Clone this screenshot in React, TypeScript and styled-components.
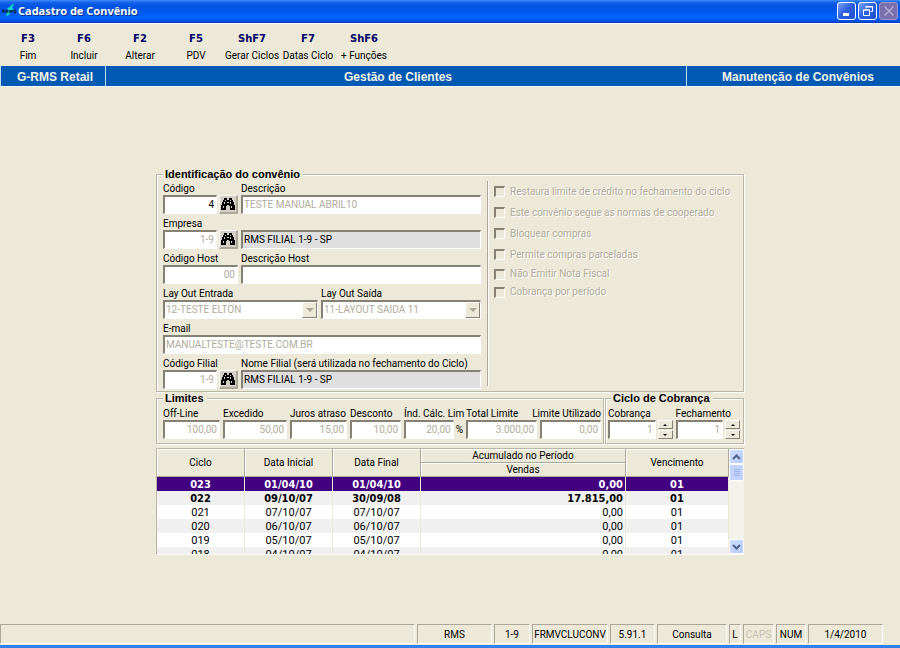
import React from 'react';
import styled, { createGlobalStyle, css } from 'styled-components';

const face = '#ece9d8';
const shade = '#aca899';
const dark = '#858275';
const formFont = 'Roboto, "Liberation Sans", sans-serif';

const GlobalStyle = createGlobalStyle`
  * { box-sizing: border-box; }
  body {
    margin: 0;
    background: ${face};
    color: #000;
    font: 10px/14px ${formFont};
  }
  button, input, select { font: inherit; color: inherit; margin: 0; border-radius: 0; }
  label { height: 14px; line-height: 16px; white-space: nowrap; }
`;

const Window = styled.div`
  display: flex;
  flex-direction: column;
  min-height: 100vh;
  overflow: hidden;
`;

const TitleBar = styled.header`
  display: flex;
  align-items: center;
  gap: 2px;
  height: 23px;
  padding: 0 2px;
  border-bottom: 1px solid #0a3fc0;
  background: linear-gradient(#3b8cfb 0, #1660ea 12%, #0053e1 28%, #0058ee 55%, #0066ff 80%, #0048d8 100%);
`;

const Title = styled.h1`
  flex: 1;
  margin: 0;
  color: #fff;
  font: bold 11px/16px "Noto Sans", sans-serif;
  text-shadow: 1px 1px #0b2f8a;
`;

const WindowButtons = styled.div`
  display: flex;
  gap: 2px;
`;

const WindowButton = styled.button<{ $off?: boolean }>`
  display: grid;
  place-items: center;
  width: 19px;
  height: 18px;
  padding: 0;
  border: 1px solid ${p => (p.$off ? '#a096c8' : '#fff')};
  border-radius: 3px;
  background: ${p => (p.$off ? '#7a70ae' : 'linear-gradient(135deg, #7fa4f5, #2f62e0 45%, #1f4fd0)')};
`;

const Toolbar = styled.nav`
  display: flex;
  height: 43px;
  padding-top: 6px;
  border-top: 1px solid #fff;
`;

const ToolButton = styled.button`
  display: flex;
  flex-direction: column;
  align-items: center;
  width: 56px;
  height: 34px;
  padding: 0;
  border: 0;
  background: none;
  line-height: 17px;
  white-space: nowrap;
`;

const ToolKey = styled.b`
  color: #000066;
  font: bold 10px/17px "DejaVu Sans", sans-serif;
`;

const Band = styled.div`
  display: flex;
  height: 21px;
  border-bottom: 1px solid #fff;
  background: #005ab4;
  color: #f4f2e6;
  font: bold 12px/22px "Liberation Sans", sans-serif;
  text-align: center;
`;

const BandCell = styled.div<{ $width?: number; $end?: boolean }>`
  flex: ${p => (p.$width ? `0 0 ${p.$width}px` : '1')};
  padding-left: 4px;
  border-left: 1px solid #c6dcf0;
  ${p => p.$end && css`padding-right: 26px; text-align: right;`}
`;

const Workspace = styled.main`
  flex: 1;
  padding-top: 81px;
`;

const Form = styled.form`
  width: 100%;
  max-width: 588px;
  margin: 0 auto;
`;

const Group = styled.fieldset<{ $kind?: 'limits' | 'cycle' }>`
  display: flex;
  gap: ${p => (p.$kind ? 3 : 0)}px;
  min-width: 0;
  margin: 0;
  padding: ${p => (p.$kind === 'limits' ? '1px 2px 4px 6px' : p.$kind === 'cycle' ? '1px 3px 4px 2px' : '0 3px 2px 6px')};
  border: 1px solid #b9b6a6;
  box-shadow: inset 1px 1px #fff, 1px 1px #fff;
`;

const Legend = styled.legend<{ $inset?: boolean }>`
  margin-left: ${p => (p.$inset ? 3 : 0)}px;
  padding: 0 3px 0 2px;
  background: ${face};
  font: bold 11px/13px "Liberation Sans", sans-serif;
`;

const GroupRow = styled.div`
  display: grid;
  grid-template-columns: 1fr 139px;
  gap: 1px;
`;

const Identity = styled.div`
  display: flex;
  flex-direction: column;
  gap: 2px;
  flex: 0 0 324px;
  padding-right: 6px;
`;

const Row = styled.div`
  display: flex;
  align-items: flex-end;
  gap: 3px;
`;

const Field = styled.div<{ $width?: number; $right?: boolean }>`
  display: flex;
  flex-direction: column;
  flex: ${p => (p.$width ? `0 0 ${p.$width}px` : '1')};
  min-width: 0;
  align-items: ${p => (p.$right ? 'flex-end' : 'stretch')};
`;

const Line = styled.div`
  display: flex;
  align-items: center;
  align-self: stretch;
  flex: 0 1 auto;
  gap: 2px;
  height: 19px;
`;

const sunken = css`
  border: 1px solid #fff;
  border-top: 2px solid ${dark};
  border-left: 2px solid ${dark};
`;

const Input = styled.input<{ $right?: boolean; $gray?: boolean }>`
  ${sunken}
  min-width: 0;
  width: 100%;
  height: 19px;
  padding: 0 ${p => (p.$right ? 2 : 1)}px 1px;
  background: ${p => (p.$gray ? '#dfdfdf' : '#fff')};
  text-align: ${p => (p.$right ? 'right' : 'left')};
  &:disabled { color: #b0ac9c; }
`;

const Select = styled.select`
  ${sunken}
  display: block;
  width: 100%;
  height: 19px;
  padding: 0 18px 0 1px;
  appearance: none;
  background: #fff;
  &:disabled { color: #b0ac9c; opacity: 1; }
`;

const SelectBox = styled.div`
  position: relative;
  height: 19px;
`;

const SelectArrow = styled.span`
  position: absolute;
  top: 2px;
  right: 1px;
  display: grid;
  place-items: center;
  width: 15px;
  height: 16px;
  border: 1px solid #fff;
  border-right-color: ${dark};
  border-bottom-color: ${dark};
  background: ${face};
  pointer-events: none;
`;

const FindButton = styled.button`
  display: grid;
  place-items: center;
  flex: 0 0 19px;
  height: 19px;
  padding: 0;
  border: 1px solid #fff;
  border-right: 2px solid ${shade};
  border-bottom: 2px solid ${shade};
  background: #d4d0c8;
`;

const Checks = styled.div`
  flex: 1;
  margin-bottom: 3px;
  padding: 0 0 0 6px;
  border-left: 1px solid ${shade};
  box-shadow: inset 1px 0 #fff;
`;

const Check = styled.label<{ $tight?: boolean }>`
  display: flex;
  align-items: center;
  gap: 5px;
  height: ${p => (p.$tight ? 18 : 21)}px;
  color: #b0ac9c;
  text-shadow: 1px 1px #fff;
`;

const CheckInput = styled.input`
  ${sunken}
  appearance: none;
  width: 11px;
  height: 11px;
  background: ${face};
`;

const Spinner = styled.div`
  display: flex;
  flex-direction: column;
  justify-content: space-between;
  flex: 0 0 15px;
  height: 19px;
`;

const SpinButton = styled.button`
  display: grid;
  place-items: center;
  height: 9px;
  padding: 0;
  border: 1px solid #fff;
  border-right-color: ${dark};
  border-bottom-color: ${dark};
  background: ${face};
`;

const GridPanel = styled.div`
  display: flex;
  height: 107px;
  margin-top: 4px;
  border-top: 1px solid #b9b6a6;
  border-left: 1px solid #b9b6a6;
  border-bottom: 1px solid #fff;
  overflow: hidden;
`;

const GridView = styled.div`
  flex: 1;
  min-width: 0;
  overflow: hidden;
`;

const Table = styled.table`
  width: 100%;
  table-layout: fixed;
  border-collapse: separate;
  border-spacing: 0;
  text-align: center;
`;

const Head = styled.th`
  height: 14px;
  padding: 1px 0 0;
  border-right: 1px solid ${shade};
  border-bottom: 1px solid ${shade};
  box-shadow: inset 1px 1px #fff;
  font-weight: normal;
  line-height: 12px;
`;

const BodyRow = styled.tr<{ $state: string }>`
  height: 14px;
  background: ${p => (p.$state === 'selected' ? '#400080' : p.$state === 'odd' ? '#fff' : '#f0f0f0')};
  color: ${p => (p.$state === 'selected' ? '#fff' : '#000')};
`;

const Cell = styled.td<{ $bold?: boolean; $right?: boolean }>`
  height: 14px;
  padding: 1px ${p => (p.$right ? 2 : 0)}px 0 0;
  border-right: 1px solid ${face};
  text-align: ${p => (p.$right ? 'right' : 'center')};
  font: ${p => (p.$bold ? 'bold 11px/13px "DejaVu Sans Condensed", "Liberation Sans", sans-serif' : `11px/13px ${formFont}`)};
`;

const ScrollBar = styled.div`
  display: flex;
  flex-direction: column;
  width: 15px;
  background: #f2f1ea;
`;

const ScrollButton = styled.button`
  display: grid;
  place-items: center;
  height: 15px;
  padding: 0;
  border: 1px solid #fff;
  border-radius: 2px;
  background: linear-gradient(135deg, #cfdcff, #b6cbfb);
`;

const ScrollThumb = styled.div`
  display: grid;
  place-items: center;
  height: 17px;
  margin-bottom: auto;
  border: 1px solid #fff;
  border-radius: 2px;
  background: #c3d3fd;
`;

const StatusBar = styled.footer`
  display: flex;
  gap: 2px;
  height: 24px;
  padding-right: 17px;
  border-bottom: 3px solid #2f80e8;
  line-height: 19px;
  text-align: center;
`;

const StatusCell = styled.div<{ $width?: number; $off?: boolean }>`
  flex: ${p => (p.$width ? `0 0 ${p.$width}px` : '1')};
  height: 20px;
  border: 1px solid #fff;
  border-top-color: ${shade};
  border-left-color: ${shade};
  color: ${p => (p.$off ? '#c4c0b0' : '#000')};
  white-space: nowrap;
`;

const Binoculars = () => (
  <svg width="14" height="12" viewBox="0 0 14 12" shapeRendering="crispEdges" aria-hidden="true">
    <path d="M3 0h3v2h2V0h3v2h1v2h1v3h1v5H9V8H8V7H6v1H5v4H0V7h1V4h1V2h1z" fill="#000" />
    <path d="M4 2h1v1H4zM3 4h1v2H3zM2 8h1v2H2zM9 2h1v1H9zM9 4h1v2H9zM10 8h1v2h-1zM6 4h2v1H6z" fill="#d4d0c8" />
  </svg>
);

const Logo = () => (
  <svg width="14" height="14" viewBox="0 0 14 14" aria-hidden="true">
    <path d="M4 12 6 5 5 4l3-1q1-3 4-3L10 4l2 1-3 2-2 4z" fill="#10d8d0" />
    <path d="M0 9V6h2v1.500H0M2 9V7.500M4 9V6l1 2 1-2v3M8 9V6l1 2 1-2v3M14 6h-2v1.500h1.500V9H12" fill="none" stroke="#02203c" />
  </svg>
);

const Triangle = ({ up, size, color }: { up?: boolean; size: number; color: string }) => (
  <svg width={size * 2} height={size} viewBox="0 0 4 2" aria-hidden="true">
    <path d={up ? 'M0 2 2 0l2 2z' : 'M0 0l2 2 2-2z'} fill={color} />
  </svg>
);

const Chevron = ({ up }: { up?: boolean }) => (
  <svg width="9" height="6" viewBox="0 0 9 6" aria-hidden="true">
    <path d={up ? 'M1 5l3.500-3.500L8 5' : 'M1 1l3.500 3.500L8 1'} fill="none" stroke="#4d6185" strokeWidth="2" />
  </svg>
);

const tools = [
  ['F3', 'Fim'], ['F6', 'Incluir'], ['F2', 'Alterar'], ['F5', 'PDV'],
  ['ShF7', 'Gerar Ciclos'], ['F7', 'Datas Ciclo'], ['ShF6', '+ Funções'],
];

const options = [
  'Restaura limite de crédito no fechamento do ciclo',
  'Este convênio segue as normas de cooperado',
  'Bloquear compras',
  'Permite compras parceladas',
  'Não Emitir Nota Fiscal',
  'Cobrança por período',
];

const cycles = [
  ['023', '01/04/10', '01/04/10', '0,00', '01'],
  ['022', '09/10/07', '30/09/08', '17.815,00', '01'],
  ['021', '07/10/07', '07/10/07', '0,00', '01'],
  ['020', '06/10/07', '06/10/07', '0,00', '01'],
  ['019', '05/10/07', '05/10/07', '0,00', '01'],
  ['018', '04/10/07', '04/10/07', '0,00', '01'],
];

const limits = [
  { id: 'offline', label: 'Off-Line', value: '100,00', width: 57 },
  { id: 'excedido', label: 'Excedido', value: '50,00', width: 64 },
  { id: 'juros', label: 'Juros atraso', value: '15,00', width: 57 },
  { id: 'desconto', label: 'Desconto', value: '10,00', width: 51 },
  { id: 'indice', label: 'Índ. Cálc. Lim', value: '20,00', width: 59, unit: '%' },
  { id: 'total', label: 'Total Limite', value: '3.000,00', width: 71 },
  { id: 'utilizado', label: 'Limite Utilizado', value: '0,00', right: true },
];

const status: { text: string; width?: number; off?: boolean }[] = [
  { text: '' }, { text: 'RMS', width: 75 }, { text: '1-9', width: 36 }, { text: 'FRMVCLUCONV', width: 76 },
  { text: '5.91.1', width: 45 }, { text: 'Consulta', width: 70 }, { text: 'L', width: 12 },
  { text: 'CAPS', width: 31, off: true }, { text: 'NUM', width: 30 }, { text: '1/4/2010', width: 75 },
];

function Lookup({ id, label, value, disabled }: { id: string; label: string; value: string; disabled?: boolean }) {
  return (
    <Field $width={75}>
      <label htmlFor={id}>{label}</label>
      <Line>
        <Input id={id} defaultValue={value} disabled={disabled} $right />
        <FindButton type="button" aria-label={`Procurar ${label}`}><Binoculars /></FindButton>
      </Line>
    </Field>
  );
}

function TextField({ id, label, value, disabled, gray, right, width }: {
  id: string; label: string; value: string; disabled?: boolean; gray?: boolean; right?: boolean; width?: number;
}) {
  return (
    <Field $width={width}>
      <label htmlFor={id}>{label}</label>
      <Line>
        <Input id={id} defaultValue={value} disabled={disabled} readOnly={gray} $gray={gray} $right={right} />
      </Line>
    </Field>
  );
}

function SelectField({ id, label, value, width }: { id: string; label: string; value: string; width?: number }) {
  return (
    <Field $width={width}>
      <label htmlFor={id}>{label}</label>
      <SelectBox>
        <Select id={id} disabled><option>{value}</option></Select>
        <SelectArrow><Triangle size={4} color={shade} /></SelectArrow>
      </SelectBox>
    </Field>
  );
}

function SpinField({ id, label }: { id: string; label: string }) {
  return (
    <Field>
      <label htmlFor={id}>{label}</label>
      <Line>
        <Input id={id} defaultValue="1" disabled $right />
        <Spinner>
          <SpinButton type="button" aria-label={`Aumentar ${label}`}><Triangle up size={2} color="#000" /></SpinButton>
          <SpinButton type="button" aria-label={`Diminuir ${label}`}><Triangle size={2} color="#000" /></SpinButton>
        </Spinner>
      </Line>
    </Field>
  );
}

export default function App() {
  return (
    <Window>
      <GlobalStyle />
      <TitleBar>
        <Logo />
        <Title>Cadastro de Convênio</Title>
        <WindowButtons>
          <WindowButton aria-label="Minimizar">
            <svg width="12" height="12"><path d="M2 8h6v3H2z" fill="#fff" /></svg>
          </WindowButton>
          <WindowButton aria-label="Restaurar">
            <svg width="12" height="12"><path d="M4 3.500V1.500h6.500v5H8.500M1.500 5v5.500h6V5zM1 5h7M4 2h7" fill="none" stroke="#fff" /></svg>
          </WindowButton>
          <WindowButton aria-label="Fechar" $off>
            <svg width="12" height="12"><path d="M1.500 1.500l9 9M10.500 1.500l-9 9" stroke="#b3abd2" strokeWidth="1.500" /></svg>
          </WindowButton>
        </WindowButtons>
      </TitleBar>

      <Toolbar>
        {tools.map(([key, name]) => (
          <ToolButton key={key}><ToolKey>{key}</ToolKey>{name}</ToolButton>
        ))}
      </Toolbar>

      <Band>
        <BandCell $width={105}>G-RMS Retail</BandCell>
        <BandCell>Gestão de Clientes</BandCell>
        <BandCell $width={214} $end>Manutenção de Convênios</BandCell>
      </Band>

      <Workspace>
        <Form>
          <Group>
            <Legend>Identificação do convênio</Legend>
            <Identity>
              <Row>
                <Lookup id="codigo" label="Código" value="4" />
                <TextField id="descricao" label="Descrição" value="TESTE MANUAL ABRIL10" disabled />
              </Row>
              <Row>
                <Lookup id="empresa" label="Empresa" value="1-9" disabled />
                <Input aria-label="Nome da empresa" defaultValue="RMS FILIAL 1-9 - SP" readOnly $gray />
              </Row>
              <Row>
                <TextField id="host" label="Código Host" value="00" width={75} disabled right />
                <TextField id="descHost" label="Descrição Host" value="" />
              </Row>
              <Row>
                <SelectField id="entrada" label="Lay Out Entrada" value="12-TESTE ELTON" width={155} />
                <SelectField id="saida" label="Lay Out Saída" value="11-LAYOUT SAIDA 11" />
              </Row>
              <Row>
                <TextField id="email" label="E-mail" value="MANUALTESTE@TESTE.COM.BR" disabled />
              </Row>
              <Row>
                <Lookup id="filial" label="Código Filial" value="1-9" disabled />
                <TextField id="nomeFilial" label="Nome Filial (será utilizada no fechamento do Ciclo)" value="RMS FILIAL 1-9 - SP" gray />
              </Row>
            </Identity>
            <Checks>
              {options.map((text, i) => (
                <Check key={text} $tight={i > 3}><CheckInput type="checkbox" disabled />{text}</Check>
              ))}
            </Checks>
          </Group>

          <GroupRow>
            <Group $kind="limits">
              <Legend>Limites</Legend>
              {limits.map(({ id, label, value, width, unit, right }) => (
                <Field key={id} $width={width} $right={right}>
                  <label htmlFor={id}>{label}</label>
                  <Line>
                    <Input id={id} defaultValue={value} disabled $right />
                    {unit}
                  </Line>
                </Field>
              ))}
            </Group>
            <Group $kind="cycle">
              <Legend $inset>Ciclo de Cobrança</Legend>
              <SpinField id="cobranca" label="Cobrança" />
              <SpinField id="fechamento" label="Fechamento" />
            </Group>
          </GroupRow>

          <GridPanel>
            <GridView>
              <Table>
                <colgroup>
                  <col width="88" /><col width="88" /><col width="88" /><col /><col width="103" />
                </colgroup>
                <thead>
                  <tr>
                    <Head rowSpan={2}>Ciclo</Head>
                    <Head rowSpan={2}>Data Inicial</Head>
                    <Head rowSpan={2}>Data Final</Head>
                    <Head>Acumulado no Período</Head>
                    <Head rowSpan={2}>Vencimento</Head>
                  </tr>
                  <tr><Head>Vendas</Head></tr>
                </thead>
                <tbody>
                  {cycles.map((cells, r) => (
                    <BodyRow key={cells[0]} $state={r === 0 ? 'selected' : r % 2 ? 'even' : 'odd'}>
                      {cells.map((text, c) => (
                        <Cell key={c} $bold={r < 2} $right={c === 3}>{text}</Cell>
                      ))}
                    </BodyRow>
                  ))}
                </tbody>
              </Table>
            </GridView>
            <ScrollBar>
              <ScrollButton type="button" aria-label="Rolar para cima"><Chevron up /></ScrollButton>
              <ScrollThumb>
                <svg width="6" height="8"><path d="M0 .5h6M0 2.500h6M0 4.500h6M0 6.500h6" stroke="#9cb2ee" /></svg>
              </ScrollThumb>
              <ScrollButton type="button" aria-label="Rolar para baixo"><Chevron /></ScrollButton>
            </ScrollBar>
          </GridPanel>
        </Form>
      </Workspace>

      <StatusBar>
        {status.map(({ text, width, off }) => (
          <StatusCell key={text} $width={width} $off={off}>{text}</StatusCell>
        ))}
      </StatusBar>
    </Window>
  );
}
